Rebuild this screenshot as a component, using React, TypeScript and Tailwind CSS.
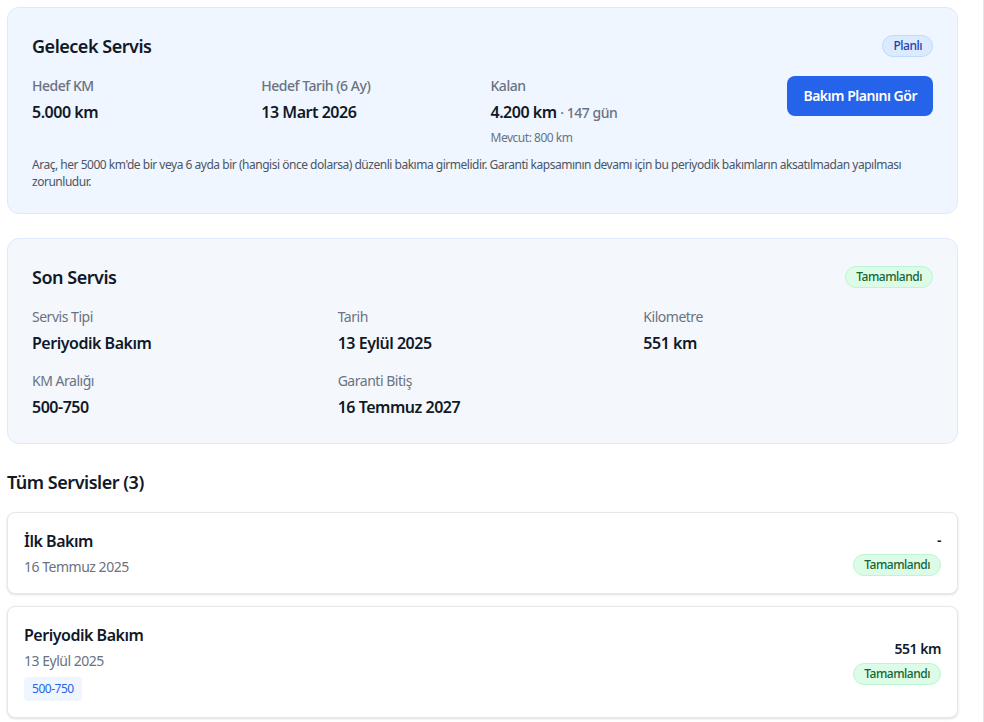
import React from 'react';

interface ServiceItem {
  id: string;
  title: string;
  date: string;
  km: string;
  range?: string;
  status: string;
}

const services: ServiceItem[] = [
  { id: '1', title: 'İlk Bakım', date: '16 Temmuz 2025', km: '-', status: 'Tamamlandı' },
  { id: '2', title: 'Periyodik Bakım', date: '13 Eylül 2025', km: '551 km', range: '500-750', status: 'Tamamlandı' },
];

const DoneBadge = () => (
  <span className="inline-flex items-center rounded-full border border-[#bbf7d0] bg-[#dcfce7] px-2.5 py-0.5 text-xs font-medium text-[#166534]">
    Tamamlandı
  </span>
);

const Field = ({ label, value, bold }: { label: string; value: string; bold?: boolean }) => (
  <div>
    <p className={`text-sm text-[#6b7280] ${bold ? 'font-medium' : ''}`}>{label}</p>
    <p className="mt-1 text-base font-semibold text-[#111827]">{value}</p>
  </div>
);

export default function App() {
  return (
    <div className="min-h-screen bg-white border-r border-[#e5e7eb]" style={{ fontFamily: '"Noto Sans", "Open Sans", sans-serif' }}>
      <div className="pl-[7px] pr-[25px] pt-[7px] pb-6 space-y-6 tracking-[-0.03em]">
        {/* Gelecek servis */}
        <div className="rounded-xl border border-[#dbeafe] bg-[#eff6ff] px-6 pt-6 pb-[23px]">
          <div className="flex items-center justify-between">
            <h2 className="text-lg font-semibold text-[#111827]">Gelecek Servis</h2>
            <span className="inline-flex items-center rounded-full border border-[#bfdbfe] bg-[#dbeafe] px-2.5 py-0.5 text-xs font-medium text-[#1e40af]">
              Planlı
            </span>
          </div>
          <div className="mt-4 grid grid-cols-4 gap-4">
            <Field label="Hedef KM" value="5.000 km" bold />
            <Field label="Hedef Tarih (6 Ay)" value="13 Mart 2026" bold />
            <div>
              <p className="text-sm font-medium text-[#6b7280]">Kalan</p>
              <p className="mt-1 text-base font-semibold text-[#111827]">
                4.200 km <span className="text-sm font-medium text-[#6b7280]">· 147 gün</span>
              </p>
              <p className="mt-1.5 text-xs text-[#6b7280]">Mevcut: 800 km</p>
            </div>
            <div className="flex items-start justify-end">
              <button className="rounded-lg bg-[#2563eb] px-4 py-2.5 text-sm font-semibold text-white">Bakım Planını Gör</button>
            </div>
          </div>
          <p className="mt-2.5 text-xs leading-[17px] text-[#4b5563]">
            Araç, her 5000 km'de bir veya 6 ayda bir (hangisi önce dolarsa) düzenli bakıma girmelidir. Garanti kapsamının devamı için bu periyodik bakımların aksatılmadan yapılması zorunludur.
          </p>
        </div>

        {/* Son servis */}
        <div className="rounded-xl border border-[#dbeafe] bg-[#f4f8fd] p-6">
          <div className="flex items-center justify-between">
            <h2 className="text-lg font-semibold text-[#111827]">Son Servis</h2>
            <DoneBadge />
          </div>
          <div className="mt-4 grid grid-cols-3 gap-4">
            <Field label="Servis Tipi" value="Periyodik Bakım" />
            <Field label="Tarih" value="13 Eylül 2025" />
            <Field label="Kilometre" value="551 km" />
            <Field label="KM Aralığı" value="500-750" />
            <Field label="Garanti Bitiş" value="16 Temmuz 2027" />
          </div>
        </div>

        {/* Tüm servisler */}
        <div>
          <h3 className="mb-4 text-lg font-semibold text-[#111827]">Tüm Servisler (3)</h3>
          <div className="space-y-3">
            {services.map(s => (
              <div key={s.id} className="flex items-center justify-between rounded-lg border border-[#e5e7eb] bg-white p-4 shadow-sm">
                <div>
                  <p className="text-base font-semibold text-[#111827]">{s.title}</p>
                  <p className="mt-1 text-sm text-[#6b7280]">{s.date}</p>
                  {s.range && (
                    <span className="mt-1.5 inline-block rounded bg-[#eff6ff] px-2 py-1 text-xs text-[#2563eb]">{s.range}</span>
                  )}
                </div>
                <div className="flex flex-col items-end gap-1">
                  <p className="text-sm font-semibold text-[#111827]">{s.km}</p>
                  <DoneBadge />
                </div>
              </div>
            ))}
          </div>
        </div>
      </div>
    </div>
  );
}
